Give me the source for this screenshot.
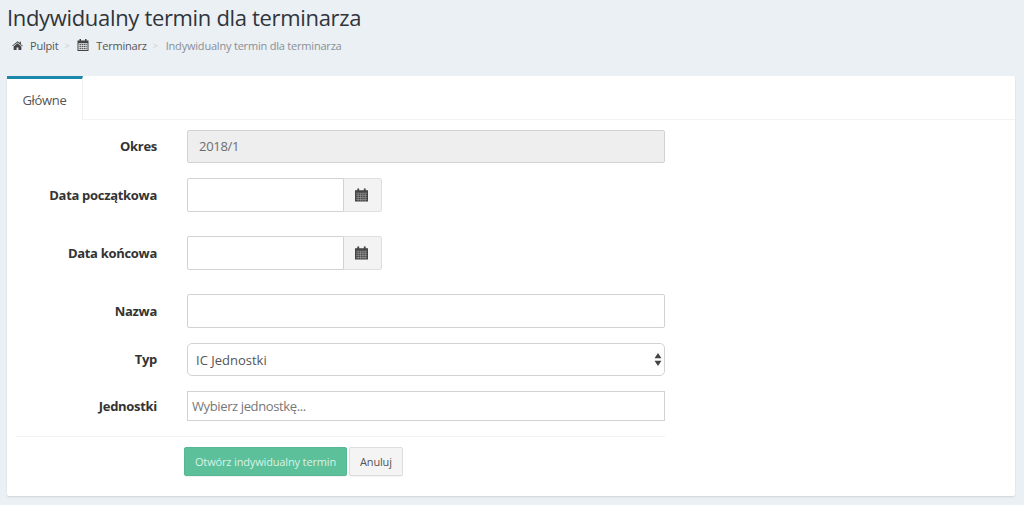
<div class="page">
  <header class="head">
    <h1>Indywidualny termin dla terminarza</h1>
    <nav class="crumbs">
      <svg class="ic" viewBox="0 0 12 10" aria-hidden="true"><path d="M6 .4.2 5.2l.6.7L6 1.700l5.200 4.200.6-.7-2.100-1.700V1H8.300v1.300zM1.800 6v4h3.200V7.200h2V10h3.200V6L6 2.600z"/></svg>
      <a href="#p" class="link">Pulpit</a>
      <span class="sep">&gt;</span>
      <svg class="ic cal-o" viewBox="0 0 12 12" aria-hidden="true"><path d="M2.500 0h1.500v1.500h4V0h1.500v1.500H11.500v10.500H.5V1.500h2zM1.500 4.200v6.800h9V4.200zM2.500 5h1.400v1.300H2.500zM4.600 5h1.300v1.300H4.600zM6.600 5h1.300v1.300H6.600zM8.500 5H9.700v1.300H8.500zM2.500 7h1.400v1.300H2.500zM4.600 7h1.300v1.300H4.600zM6.600 7h1.300v1.300H6.600zM8.500 7H9.700v1.300H8.500zM2.500 8.900h1.400v1.300H2.500zM4.600 8.900h1.300v1.300H4.600zM6.600 8.900h1.300v1.300H6.600zM8.500 8.900H9.700v1.300H8.500z" fill-rule="evenodd"/></svg>
      <a href="#t" class="link">Terminarz</a>
      <span class="sep">&gt;</span>
      <span class="cur">Indywidualny termin dla terminarza</span>
    </nav>
  </header>

  <section class="card">
    <div class="tabs"><div class="tab">Główne</div></div>
    <form class="form" onsubmit={(e) => e.preventDefault()}>
      <div class="row r-okres">
        <label for="okres">Okres</label>
        <input id="okres" class="ctl disabled" value="2018/1" disabled />
      </div>
      <div class="row r-date">
        <label for="od">Data początkowa</label>
        <div class="group">
          <input id="od" class="ctl" />
          <span class="addon">
            <svg viewBox="0 0 14 14" aria-hidden="true"><path d="M2.500 0h2v2h5V0h2v2H14v12H0V2h2.500z"/><path class="grid" d="M1 5h12M1 7.300h12M1 9.600h12M1 11.900h12M3.400 5v8.500M6 5v8.500M8.500 5v8.500M11 5v8.500"/></svg>
          </span>
        </div>
      </div>
      <div class="row r-date">
        <label for="do">Data końcowa</label>
        <div class="group">
          <input id="do" class="ctl" />
          <span class="addon">
            <svg viewBox="0 0 14 14" aria-hidden="true"><path d="M2.500 0h2v2h5V0h2v2H14v12H0V2h2.500z"/><path class="grid" d="M1 5h12M1 7.300h12M1 9.600h12M1 11.900h12M3.400 5v8.500M6 5v8.500M8.500 5v8.500M11 5v8.500"/></svg>
          </span>
        </div>
      </div>
      <div class="row r-nazwa">
        <label for="nazwa">Nazwa</label>
        <input id="nazwa" class="ctl" />
      </div>
      <div class="row r-typ">
        <label for="typ">Typ</label>
        <div class="sel">
          <select id="typ" class="ctl"><option>IC Jednostki</option></select>
          <svg class="arrows" viewBox="0 0 8 13" aria-hidden="true"><path d="M4 0l3.500 5.200H.5zM4 13 .5 7.800h7z"/></svg>
        </div>
      </div>
      <div class="row r-jedn">
        <label for="jedn">Jednostki</label>
        <input id="jedn" class="ctl chosen" placeholder="Wybierz jednostkę..." />
      </div>
      <div class="actions">
        <button class="btn primary" type="submit">Otwórz indywidualny termin</button>
        <button class="btn" type="button">Anuluj</button>
      </div>
    </form>
  </section>
</div>

<style>
  :global(body) { margin: 0; background: #ebf0f4; }
  .page {
    height: 505px; overflow: hidden; box-sizing: border-box;
    padding: 0 9px 0 7px;
    font-family: "Open Sans", "Noto Sans", sans-serif;
    color: #333;
  }
  .head { height: 76px; }
  h1 {
    margin: 0; padding-top: 4px;
    font-size: 22px; letter-spacing: -.33px; line-height: 27px; font-weight: 400; color: #2f353b;
  }
  .crumbs {
    display: flex; align-items: center; height: 16px; margin-top: 6px;
    padding-left: 5px; font-size: 11px; letter-spacing: -.2px; color: #555;
  }
  .ic { width: 11px; height: 11px; fill: #444; flex: none; }
  .cal-o { width: 12px; height: 12px; }
  .link { color: #555; text-decoration: none; margin-left: 7px; }
  .sep { color: #ccc; margin: 0 8px 0 6px; font-size: 9px; }
  .cur { color: #8a8f94; }

  .card {
    height: 420px; box-sizing: border-box;
    background: #fff; border-radius: 2px;
    box-shadow: 0 1px 2px rgba(0,0,0,.12);
  }
  .tabs { height: 44px; box-sizing: border-box; border-bottom: 1px solid #f3f3f3; }
  .tab {
    width: 76px; height: 44px; box-sizing: border-box;
    border-top: 3px solid #1b87aa; border-right: 1px solid #f0f0f0;
    background: #fff; color: #555;
    font-size: 13px; letter-spacing: -.3px; text-align: center; line-height: 42px;
  }
  .form { padding: 10px 350px 0 9px; }
  .row { display: grid; grid-template-columns: 141px 1fr; column-gap: 30px; align-items: center; }
  label { text-align: right; font-weight: 700; font-size: 13px; letter-spacing: -.3px; color: #333; padding-bottom: 1px; }
  .ctl {
    display: block; width: 100%; box-sizing: border-box; height: 34px;
    border: 1px solid #d2d2d2; border-radius: 2px; background: #fff;
    font: inherit; font-size: 13px; color: #555; padding: 0 11px 1px; margin: 0; outline: none;
  }
  .disabled { background: #eee; height: 33px; color: #6d6d6d; letter-spacing: -.3px; }
  .r-okres { margin-bottom: 15px; }
  .r-date { margin-bottom: 24px; }
  .group { display: flex; width: 195px; }
  .group .ctl { width: 157px; border-radius: 2px 0 0 2px; flex: none; }
  .addon {
    flex: 1; display: flex; align-items: center; justify-content: center;
    background: #f3f3f3; border: 1px solid #dedede; border-left: 0; padding-right: 2px;
    border-radius: 0 3px 3px 0; height: 34px; box-sizing: border-box;
  }
  .addon svg { width: 13px; height: 14px; fill: #444; }
  .grid { fill: none; stroke: #aaa; stroke-width: .6; }
  .r-nazwa { margin-bottom: 15px; }
  .r-typ { margin-bottom: 15px; }
  .sel { position: relative; }
  .sel select { appearance: none; height: 33px; border-radius: 5px; padding: 0 8px; }
  .arrows { position: absolute; right: 3px; top: 10px; width: 8px; height: 13px; fill: #444; }
  .chosen { height: 30px; padding: 0 4px; border-radius: 0; letter-spacing: -.38px; }
  .chosen::placeholder { color: #777; opacity: 1; }
  .actions {
    margin-top: 15px;
    border-top: 1px solid #f2f2f2; padding: 10px 0 0 168px;
    display: flex; gap: 2px;
  }
  .btn {
    font: inherit; font-size: 11px; letter-spacing: -.15px; height: 29px; box-sizing: border-box;
    padding: 0 10px; border: 1px solid #ddd; border-radius: 2px; background: #f4f4f4; color: #555;
    box-shadow: 0 1px 1px rgba(0,0,0,.05);
  }
  .primary { background: #5cc09a; border-color: #55b892; color: #d8f3e8; width: 163px; padding: 0; }
</style>
